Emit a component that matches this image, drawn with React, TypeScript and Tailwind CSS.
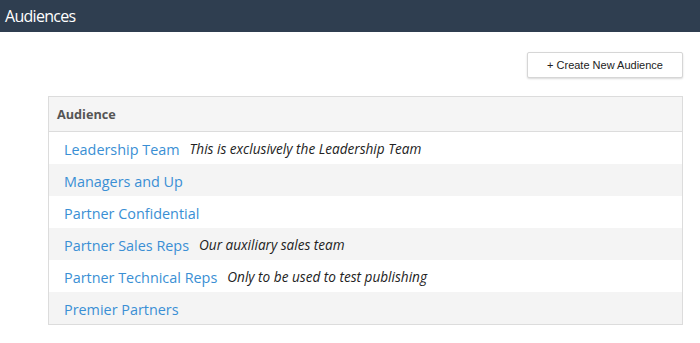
import React from "react";

const rows: { name: string; desc?: string }[] = [
  { name: "Leadership Team", desc: "This is exclusively the Leadership Team" },
  { name: "Managers and Up" },
  { name: "Partner Confidential" },
  { name: "Partner Sales Reps", desc: "Our auxiliary sales team" },
  { name: "Partner Technical Reps", desc: "Only to be used to test publishing" },
  { name: "Premier Partners" },
];

export default function App() {
  return (
    <div className="w-[700px] h-[343px] bg-white" style={{ fontFamily: '"Open Sans", sans-serif' }}>
      <div className="h-[32px] bg-[#2f3e50] flex items-center px-[5px]">
        <span className="text-white text-[16px] tracking-[-0.7px]">Audiences</span>
      </div>
      <div className="flex justify-end pr-[17px] pt-[20px]">
        <button
          className="w-[156px] h-[26px] bg-white border border-[#d6d6d6] rounded-[2px] shadow-[0_1px_2px_rgba(0,0,0,0.15)] text-[11px] text-[#222]"
          style={{ fontFamily: '"Liberation Sans", Arial, sans-serif' }}
        >
          + Create New Audience
        </button>
      </div>
      <div className="mt-[18px] ml-[48px] w-[635px] border border-[#dcdcdc]">
        <div className="h-[35px] bg-[#f5f5f5] border-b border-[#dcdcdc] flex items-center pl-[8px] pt-[1px]">
          <span className="text-[12.7px] font-bold text-[#555]">Audience</span>
        </div>
        {rows.map((r, i) => (
          <div
            key={r.name}
            className={`h-[32px] flex items-center pl-[15px] pt-[3px] ${i % 2 === 1 ? "bg-[#f4f4f4]" : "bg-white"}`}
          >
            <span className="text-[14.4px] text-[#3a8fd4]">{r.name}</span>
            {r.desc && <span className="ml-[10px] text-[13.6px] italic text-[#222]">{r.desc}</span>}
          </div>
        ))}
      </div>
    </div>
  );
}
